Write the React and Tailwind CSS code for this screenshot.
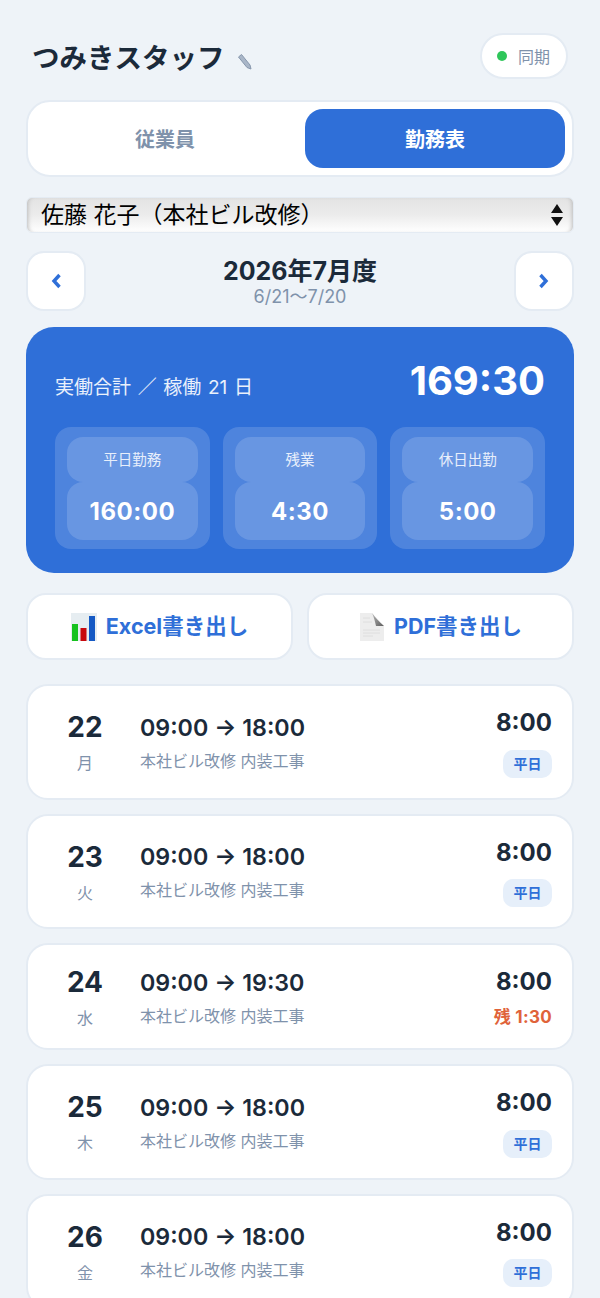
import React from "react";

const days = [
  { d: "22", w: "月", time: "09:00 → 18:00", total: "8:00", tag: "平日" },
  { d: "23", w: "火", time: "09:00 → 18:00", total: "8:00", tag: "平日" },
  { d: "24", w: "水", time: "09:00 → 19:30", total: "8:00", over: "残 1:30" },
  { d: "25", w: "木", time: "09:00 → 18:00", total: "8:00", tag: "平日" },
  { d: "26", w: "金", time: "09:00 → 18:00", total: "8:00", tag: "平日" },
];

const stats = [
  { label: "平日勤務", value: "160:00" },
  { label: "残業", value: "4:30" },
  { label: "休日出勤", value: "5:00" },
];

function ChartIcon() {
  return (
    <svg width="26" height="28" viewBox="0 0 26 28">
      <rect width="26" height="28" fill="#e6edf1" />
      <rect x="1" y="11" width="6" height="17" fill="#16c21f" />
      <rect x="9.5" y="15" width="6" height="13" fill="#c8090d" />
      <rect x="18" y="3" width="6" height="25" fill="#1559c4" />
    </svg>
  );
}

function DocIcon() {
  return (
    <svg width="26" height="28" viewBox="0 0 26 28">
      <defs>
        <linearGradient id="fold" x1="0" y1="0" x2="1" y2="1">
          <stop offset="0" stopColor="#b5b5b5" />
          <stop offset="1" stopColor="#5f5f5f" />
        </linearGradient>
      </defs>
      <path d="M1 0H13L25 13V28H1Z" fill="#ededed" />
      <path d="M13 0C16 4 20 9 25 13H17C16 9 15 4 13 0Z" fill="url(#fold)" />
      <path d="M4 5H11M4 9H13M4 17H21M4 20H21M4 23H14" stroke="#dedede" strokeWidth="1" />
    </svg>
  );
}

function DayRow({ item }) {
  return (
    <div className="flex items-center rounded-[22px] border-2 border-[#e4ebf3] bg-white pl-[23px] pr-[20px] py-[20px]">
      <div className="w-[68px] shrink-0 flex flex-col items-center">
        <div className="mt-[1px] h-[32px] text-[28px] leading-[32px] font-bold text-[#1b2a3a]">{item.d}</div>
        <div className="mt-[10px] h-[20px] text-[16px] leading-[20px] text-[#7f92ab]">{item.w}</div>
      </div>
      <div className="ml-[21px] flex-1">
        <div className="mt-[1px] text-[23.25px] leading-[30px] font-semibold text-[#1b2a3a]">{item.time}</div>
        <div className="mt-[7px] h-[22px] text-[16px] leading-[22px] text-[#7f92ab]">本社ビル改修 内装工事</div>
      </div>
      <div className="flex flex-col items-end">
        <div className="mt-[1px] text-[24px] leading-[32.5px] font-bold text-[#1b2a3a]">{item.total}</div>
        {item.tag ? (
          <div className="mt-[10px] h-[28px] rounded-[10px] bg-[#e6effa] px-[10.5px] py-[4px] text-[14px] leading-[20px] font-bold text-[#2f6fd8]">
            {item.tag}
          </div>
        ) : (
          <div className="mt-[7px] h-[22.5px] text-[17px] leading-[22.5px] font-bold tracking-[0.3px] text-[#e0633a]">{item.over}</div>
        )}
      </div>
    </div>
  );
}

export default function App() {
  return (
    <div
      className="h-[1298px] overflow-hidden bg-[#eef3f8] px-[26px] pt-[33px]"
      style={{ fontFamily: "Inter, 'Noto Sans CJK JP', sans-serif" }}
    >
      {/* header */}
      <div className="flex h-[46px] items-center justify-between pr-[6px]">
        <div className="flex items-center pl-[6px]">
          <h1 className="mt-[3px] text-[27.5px] leading-[40px] font-bold text-[#1b2a3a]">つみきスタッフ</h1>
          <svg className="ml-[12px] mt-[9px]" width="15" height="18" viewBox="0 0 15 18">
            <path d="M1.5 5L4.5 2.5L13 13L14 17L10 15.5Z" fill="#a9b6c8" stroke="#8797ad" strokeWidth="1" />
          </svg>
        </div>
        <div className="flex h-[46px] items-center rounded-full border-2 border-[#e4ebf3] bg-white pl-[15px] pr-[16px]">
          <span className="h-[10px] w-[10px] rounded-full bg-[#2fc65a]" />
          <span className="ml-[11px] mt-[2px] text-[16px] text-[#7f92ab]">同期</span>
        </div>
      </div>

      {/* tabs */}
      <div className="mt-[21px] flex h-[77px] gap-[10px] rounded-[24px] border-2 border-[#e4ebf3] bg-white p-[7px]">
        <div className="flex flex-1 items-center justify-center pt-[3px] text-[20px] font-bold text-[#7f92ab]">従業員</div>
        <div className="flex flex-1 items-center justify-center rounded-[18px] bg-[#2f6fd8] pt-[3px] text-[20px] font-bold text-white">
          勤務表
        </div>
      </div>

      {/* employee select */}
      <div className="mt-[20px] flex h-[36px] items-center justify-between rounded-[6px] border border-[#e4ebf3] bg-gradient-to-b from-[#e3e3e3] via-[#ececec] to-white pl-[14px] pr-[9px] shadow-[inset_4px_0_4px_-3px_#bbb,inset_-4px_0_4px_-3px_#bbb]">
        <span className="text-[23px] leading-[30px] text-black">佐藤 花子（本社ビル改修）</span>
        <svg width="14" height="24" viewBox="0 0 14 24">
          <path d="M7 1L13 10H1ZM7 23L1 14H13Z" fill="#111" />
        </svg>
      </div>

      {/* month nav */}
      <div className="mt-[18px] flex items-center justify-between">
        <div className="flex h-[60px] w-[60px] items-center justify-center rounded-[18px] border-2 border-[#e4ebf3] bg-white">
          <svg width="11" height="16" viewBox="0 0 11 16">
            <path d="M8.5 2L3 8L8.5 14" fill="none" stroke="#2f6fd8" strokeWidth="3.4" />
          </svg>
        </div>
        <div className="flex flex-col items-center">
          <div className="text-[25px] leading-[32px] font-bold text-[#1b2a3a]">2026年7月度</div>
          <div className="text-[18px] leading-[20px] text-[#7f92ab]">6/21〜7/20</div>
        </div>
        <div className="flex h-[60px] w-[60px] items-center justify-center rounded-[18px] border-2 border-[#e4ebf3] bg-white">
          <svg width="11" height="16" viewBox="0 0 11 16">
            <path d="M2.5 2L8 8L2.5 14" fill="none" stroke="#2f6fd8" strokeWidth="3.4" />
          </svg>
        </div>
      </div>

      {/* summary */}
      <div className="mt-[16px] h-[246px] rounded-[28px] bg-[#2f6fd8] px-[29px] pt-[28px]">
        <div className="flex h-[72px] items-start justify-between">
          <span className="mt-[20px] text-[19px] leading-[26px] text-white/90 [word-spacing:1.3px]">実働合計 ／ 稼働 21 日</span>
          <span className="text-[40px] leading-[52px] font-bold text-white">169:30</span>
        </div>
        <div className="grid grid-cols-3 gap-[13px]">
          {stats.map((s) => (
            <div key={s.label} className="h-[122px] rounded-[16px] bg-white/15 px-[12px] pt-[10px]">
              <div className="flex h-[45px] items-center justify-center rounded-[16px] bg-white/15 text-[14.5px] text-white/85">
                {s.label}
              </div>
              <div className="flex h-[58px] items-center justify-center rounded-[16px] bg-white/15 pt-[2px] text-[24px] font-bold tracking-[0.5px] text-white">
                {s.value}
              </div>
            </div>
          ))}
        </div>
      </div>

      {/* export */}
      <div className="mt-[20px] grid grid-cols-2 gap-[14px]">
        <button className="flex h-[67px] items-center justify-center gap-[9px] rounded-[20px] border-2 border-[#e4ebf3] bg-white text-[21.5px] font-bold text-[#2f6fd8]">
          <ChartIcon />
          Excel書き出し
        </button>
        <button className="flex h-[67px] items-center justify-center gap-[9px] rounded-[20px] border-2 border-[#e4ebf3] bg-white text-[21.5px] font-bold text-[#2f6fd8]">
          <DocIcon />
          PDF書き出し
        </button>
      </div>

      {/* days */}
      <div className="mt-[24px] flex flex-col gap-[14px]">
        {days.map((item) => (
          <DayRow key={item.d} item={item} />
        ))}
      </div>
    </div>
  );
}
